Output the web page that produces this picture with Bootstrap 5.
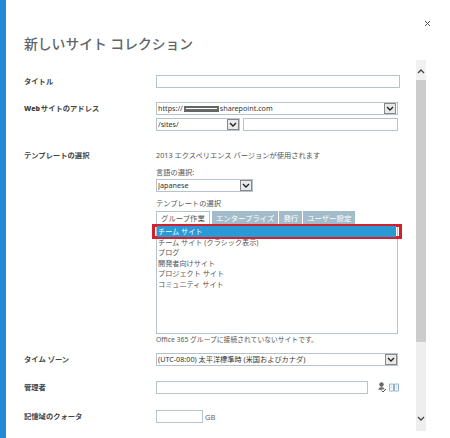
<!DOCTYPE html>
<html lang="ja">
<head>
<meta charset="utf-8">
<title>新しいサイト コレクション</title>
<link href="https://cdn.jsdelivr.net/npm/bootstrap@5.3.0/dist/css/bootstrap.min.css" rel="stylesheet">
<style>
html,body{margin:0;height:438px;overflow:hidden;background:#fff}
body{font-family:"Noto Sans","Noto Sans CJK JP",sans-serif;font-size:7.25px;line-height:10px;color:#555}
.shell{height:438px}
.side-bar{width:6px;background:#2488d8}
.pane{width:410px;padding:34px 0 0 18px}
.pane-title{font-size:13.8px;line-height:20px;font-weight:500;color:#5f6468;margin:0 0 21px;height:20px}
.lbl{width:132px;flex:none;font-weight:600;color:#444;font-size:7.3px;line-height:13px}
.lbl-web b{font-size:7px;margin-right:-1px}
.lbl-plain{line-height:10px}
.fld{font-size:7.2px;line-height:11px;color:#333;border:1px solid #b5c4cc;border-radius:0;padding:0 1px;background-color:#fff;min-height:0;box-shadow:none}
select.fld{appearance:none;padding:0 14px 0 1px;background-repeat:no-repeat;background-position:right 0 top 0;background-size:12px 11px;
background-image:url("data:image/svg+xml,%3Csvg xmlns='http://www.w3.org/2000/svg' viewBox='0 0 12 11'%3E%3Crect width='12' height='11' fill='%23e9e9e9'/%3E%3Crect x='.5' y='.5' width='11' height='10' fill='none' stroke='%23888'/%3E%3Cpath d='M3 4l3 3 3-3' fill='none' stroke='%23222' stroke-width='1.4'/%3E%3C/svg%3E")}
.h13{height:13px}
.w244{width:244px}.w242{width:242px}.w84{width:84px}.w155{width:155px}.w97{width:97px}.w212{width:212px}.w47{width:47px}
.url-sel{width:242px;height:13px}
.mask-bar{width:35px;height:6px;background:#6e6e6e;border-top:2px solid #666;border-bottom:2px solid #666;margin:0 1px}
.mask-bar::after{content:"";display:block;height:1px;margin:0 2px;background:#fff}
.arrow-box{width:12px;height:11px;background:#e9e9e9;border:1px solid #888;flex:none}
.arrow-box svg{display:block;width:10px;height:9px}
.mt-14{margin-top:14px}.mt-3px{margin-top:3px}.mt-19{margin-top:19px}.mt-7{margin-top:7px}.mt-2px{margin-top:2px}.mt-6{margin-top:6px}.mt-8{margin-top:8px}.mt-15{margin-top:15px}.mt-16{margin-top:16px}
.tabs-row{border:0;height:14px;gap:1px;flex-wrap:nowrap}
.tabs-row .nav-link{font-size:7.4px;line-height:12px;height:14px;padding:1px 4px;border:0;border-radius:0;background:#a3bccb;color:#fff}
.tabs-row .nav-link.active{background:#fff;color:#555;border:1px solid #b5c4cc;border-bottom:0;padding:0 4px 1px;margin-right:1px}
.site-list{width:242px;height:109px;border:1px solid #b5c4cc;border-radius:0;padding-top:0;position:relative}
.site-list .list-group-item{border:0;padding:0 1px;font-size:7.15px;line-height:10.65px;height:10.65px;color:#555;background:transparent;border-radius:0}
.site-list .list-group-item.active{background:#2a9ad6;color:#fff;margin-right:1px;height:10.5px;margin-top:0}
.red-frame{position:absolute;left:-5px;right:-5px;top:-2px;height:15px;border:3px solid #d3202e;pointer-events:none}
.note{font-size:6.8px;line-height:10px;margin-top:1px;color:#555}
.tools{gap:2px;margin-left:10px}
.tools svg{display:block}
.unit{margin-left:2px;line-height:14px;color:#666;font-size:7.5px}
.rail{width:34px}
.close-btn{height:60px;padding:20px 19px 33px 0;border:0;background:none;line-height:0}
.scroll-rail{width:10px;height:371px;background:#eee}
.scroll-up{height:20px;padding-top:9px;background:#f1f1f1}
.scroll-thumb{height:262px;background:#ccc}
.scroll-rest{height:89px;padding-top:74px}
.scroll-rail svg{display:block;margin:0 auto}
</style>
</head>
<body>
<div class="shell d-flex">
  <div class="side-bar"></div>
  <div class="pane">
    <h1 class="pane-title">新しいサイト コレクション</h1>

    <div class="d-flex">
      <div class="lbl">タイトル</div>
      <input class="form-control fld w244 h13" type="text" aria-label="タイトル">
    </div>

    <div class="d-flex mt-14">
      <div class="lbl lbl-web"><b>Web</b> サイトのアドレス</div>
      <div>
        <div class="fld url-sel d-flex align-items-center">
          <span>https://</span><span class="mask-bar"></span><span>sharepoint.com</span>
          <span class="arrow-box ms-auto"><svg viewBox="0 0 10 9"><path d="M2 3l3 3 3-3" fill="none" stroke="#222" stroke-width="1.4"/></svg></span>
        </div>
        <div class="d-flex mt-3px">
          <select class="form-select fld w84 h13" aria-label="パス"><option>/sites/</option></select>
          <input class="form-control fld w155 h13 ms-auto" type="text" aria-label="URL">
        </div>
      </div>
    </div>

    <div class="d-flex mt-19">
      <div class="lbl lbl-plain">テンプレートの選択</div>
      <div>
        <div>2013 エクスペリエンス バージョンが使用されます</div>
        <div class="mt-7">言語の選択:</div>
        <select class="form-select fld w97 h13 mt-2px" aria-label="言語の選択"><option>Japanese</option></select>
        <div class="mt-6">テンプレートの選択</div>
        <ul class="nav nav-tabs tabs-row mt-3px">
          <li class="nav-item"><a class="nav-link active" href="#">グループ作業</a></li>
          <li class="nav-item"><a class="nav-link" href="#">エンタープライズ</a></li>
          <li class="nav-item"><a class="nav-link" href="#">発行</a></li>
          <li class="nav-item"><a class="nav-link" href="#">ユーザー設定</a></li>
        </ul>
        <div class="list-group site-list">
          <div class="list-group-item active">チーム サイト</div>
          <div class="list-group-item">チーム サイト (クラシック表示)</div>
          <div class="list-group-item">ブログ</div>
          <div class="list-group-item">開発者向けサイト</div>
          <div class="list-group-item">プロジェクト サイト</div>
          <div class="list-group-item">コミュニティ サイト</div>
          <div class="red-frame"></div>
        </div>
        <div class="note">Office 365 グループに接続されていないサイトです。</div>
      </div>
    </div>

    <div class="d-flex mt-8">
      <div class="lbl">タイム ゾーン</div>
      <select class="form-select fld w242 h13" aria-label="タイム ゾーン"><option>(UTC-08:00) 太平洋標準時 (米国およびカナダ)</option></select>
    </div>

    <div class="d-flex mt-15">
      <div class="lbl">管理者</div>
      <input class="form-control fld w212 h13" type="text" aria-label="管理者">
      <div class="tools d-flex align-items-center">
        <svg width="9" height="11" viewBox="0 0 9 11"><circle cx="3.500" cy="2.500" r="2.200" fill="#666"/><path d="M0.500 8c0-2 1.200-3 3-3s3 1 3 2.400H3.500V8z" fill="#777"/><path d="M3.500 8.500l1.500 1.500 3-3" fill="none" stroke="#555" stroke-width="1"/></svg>
        <svg width="10" height="9" viewBox="0 0 10 9"><path d="M.5 1h4v7h-4zM5.500 1h4v7h-4z" fill="none" stroke="#8fb4cc"/><path d="M1.500 3h2M1.500 5h2M6.500 3h2M6.500 5h2" stroke="#b7cfdd"/></svg>
      </div>
    </div>

    <div class="d-flex mt-16">
      <div class="lbl">記憶域のクォータ</div>
      <input class="form-control fld w47 h13" type="text" aria-label="記憶域のクォータ">
      <span class="unit">GB</span>
    </div>
  </div>

  <div class="rail d-flex flex-column">
    <button class="close-btn text-end" type="button" aria-label="閉じる">
      <svg class="d-inline-block align-top" width="7" height="7" viewBox="0 0 7 7"><path d="M1 1l5 5M6 1L1 6" stroke="#555" stroke-width="1"/></svg>
    </button>
    <div class="scroll-rail">
      <div class="scroll-up"><svg width="8" height="5" viewBox="0 0 8 5"><path d="M1 4l3-3 3 3" fill="none" stroke="#444" stroke-width="1.3"/></svg></div>
      <div class="scroll-thumb"></div>
      <div class="scroll-rest"><svg width="8" height="5" viewBox="0 0 8 5"><path d="M1 1l3 3 3-3" fill="none" stroke="#444" stroke-width="1.3"/></svg></div>
    </div>
  </div>
</div>
<script src="https://cdn.jsdelivr.net/npm/bootstrap@5.3.0/dist/js/bootstrap.bundle.min.js"></script>
</body>
</html>
